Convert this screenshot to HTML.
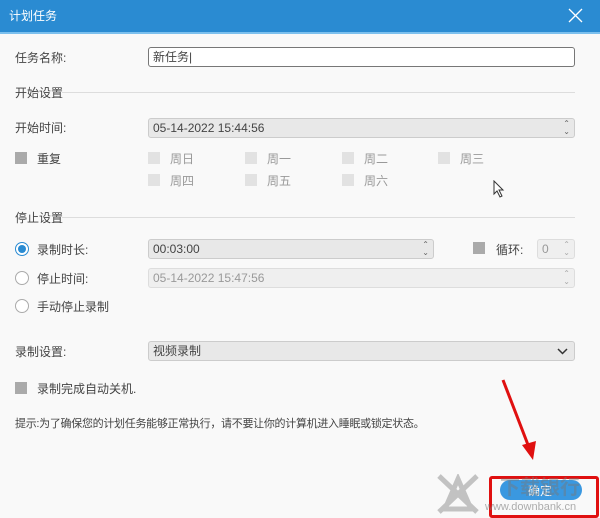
<!DOCTYPE html><html><head><meta charset="utf-8"><style>
body{margin:0;width:600px;height:518px;overflow:hidden;background:#f9f9f9;font-family:"Liberation Sans","Noto Sans CJK SC",sans-serif;font-size:12px;color:#444;position:relative}
.a{position:absolute}
.t{position:absolute;line-height:14px;white-space:nowrap}
.in{position:absolute;box-sizing:border-box;border:1px solid #ccc;border-radius:3px;background:#e8e8e8;padding-left:4px;line-height:18px;font-size:12px}
.cb{position:absolute;width:12px;height:12px;background:#e2e2e2}
.g{color:#999}
.sp{position:absolute;right:4px;top:1px;font-size:8px;line-height:8px;color:#666}
.rd{position:absolute;width:12px;height:12px;border:1px solid #aaa;border-radius:50%;background:#fff}
</style></head><body>
<div class="a" style="left:0;top:0;width:600px;height:32px;background:#2a8bd2;border-bottom:2px solid #7cc0ee"></div>
<div class="t" style="left:9px;top:9px;color:#fff;font-size:12px">计划任务</div>
<svg class="a" style="left:568px;top:8px" width="15" height="15"><path d="M1 1L14 14M14 1L1 14" stroke="#fff" stroke-width="1.3"/></svg>
<div class="t" style="left:15px;top:51px">任务名称:</div>
<div class="in" style="left:148px;top:47px;width:427px;height:20px;background:#fff;border:1px solid #777">新任务|</div>
<div class="t" style="left:15px;top:86px">开始设置</div>
<div class="a" style="left:62px;top:92px;width:513px;height:1px;background:#ddd"></div>
<div class="t" style="left:15px;top:121px">开始时间:</div>
<div class="in" style="left:148px;top:118px;width:427px;height:20px">05-14-2022 15:44:56<div class="sp">⌃<br>⌄</div></div>
<div class="cb" style="left:15px;top:152px;background:#aaa"></div><div class="t" style="left:37px;top:152px">重复</div>
<div class="cb" style="left:148px;top:152px"></div><div class="t g" style="left:170px;top:152px">周日</div>
<div class="cb" style="left:245px;top:152px"></div><div class="t g" style="left:267px;top:152px">周一</div>
<div class="cb" style="left:342px;top:152px"></div><div class="t g" style="left:364px;top:152px">周二</div>
<div class="cb" style="left:438px;top:152px"></div><div class="t g" style="left:460px;top:152px">周三</div>
<div class="cb" style="left:148px;top:174px"></div><div class="t g" style="left:170px;top:174px">周四</div>
<div class="cb" style="left:245px;top:174px"></div><div class="t g" style="left:267px;top:174px">周五</div>
<div class="cb" style="left:342px;top:174px"></div><div class="t g" style="left:364px;top:174px">周六</div>
<svg class="a" style="left:493px;top:180px" width="12" height="18"><path d="M1 1V14L4 11L7 17L9 16L6 10H10Z" fill="#fff" stroke="#333"/></svg>
<div class="t" style="left:15px;top:211px">停止设置</div>
<div class="a" style="left:62px;top:217px;width:513px;height:1px;background:#ddd"></div>
<div class="rd" style="left:15px;top:242px;border-color:#2a8bd2"><div class="a" style="left:2px;top:2px;width:8px;height:8px;border-radius:50%;background:#2a8bd2"></div></div>
<div class="t" style="left:37px;top:243px">录制时长:</div>
<div class="in" style="left:148px;top:239px;width:286px;height:20px">00:03:00<div class="sp">⌃<br>⌄</div></div>
<div class="cb" style="left:473px;top:242px;background:#aaa"></div><div class="t" style="left:496px;top:243px">循环:</div>
<div class="in g" style="left:537px;top:239px;width:38px;height:20px;background:#efefef;border-color:#ddd">0<div class="sp" style="color:#aaa">⌃<br>⌄</div></div>
<div class="rd" style="left:15px;top:271px"></div><div class="t" style="left:37px;top:272px">停止时间:</div>
<div class="in g" style="left:148px;top:268px;width:427px;height:20px;background:#efefef;border-color:#ddd">05-14-2022 15:47:56<div class="sp" style="color:#aaa">⌃<br>⌄</div></div>
<div class="rd" style="left:15px;top:299px"></div><div class="t" style="left:37px;top:300px">手动停止录制</div>
<div class="t" style="left:15px;top:345px">录制设置:</div>
<div class="in" style="left:148px;top:341px;width:427px;height:20px">视频录制<svg class="a" style="right:6px;top:6px" width="11" height="7"><path d="M1 1L5.5 5.5L10 1" stroke="#333" stroke-width="1.5" fill="none"/></svg></div>
<div class="cb" style="left:15px;top:382px;background:#aaa"></div><div class="t" style="left:37px;top:382px">录制完成自动关机.</div>
<div class="t" style="left:15px;top:417px;font-size:11px;letter-spacing:-0.3px">提示:为了确保您的计划任务能够正常执行，请不要让你的计算机进入睡眠或锁定状态。</div>
<div class="a" style="left:500px;top:480px;width:82px;height:20px;border-radius:10px;background:#3a98e0"></div>
<div class="t" style="left:528px;top:484px;color:#fff">确定</div>
<div class="a" style="left:489px;top:476px;width:104px;height:36px;border:3px solid #e01010;border-radius:3px"></div>
<svg class="a" style="left:495px;top:375px" width="50" height="90"><path d="M8 5L35 75" stroke="#e01010" stroke-width="3"/><path d="M27 70L38 85L41 66Z" fill="#e01010"/></svg>
<div class="t" style="left:500px;top:477px;font-size:20px;color:rgba(120,120,120,.45);font-weight:bold;line-height:22px">下载银行</div>
<div class="t" style="left:485px;top:500px;font-size:11px;color:rgba(120,120,120,.6)">www.downbank.cn</div>
<svg class="a" style="left:437px;top:474px" width="42" height="40"><path d="M2 2L40 38M40 2L2 38M21 5L8 35H34Z" stroke="rgba(150,150,150,.55)" stroke-width="5" fill="none"/></svg>
</body></html>
